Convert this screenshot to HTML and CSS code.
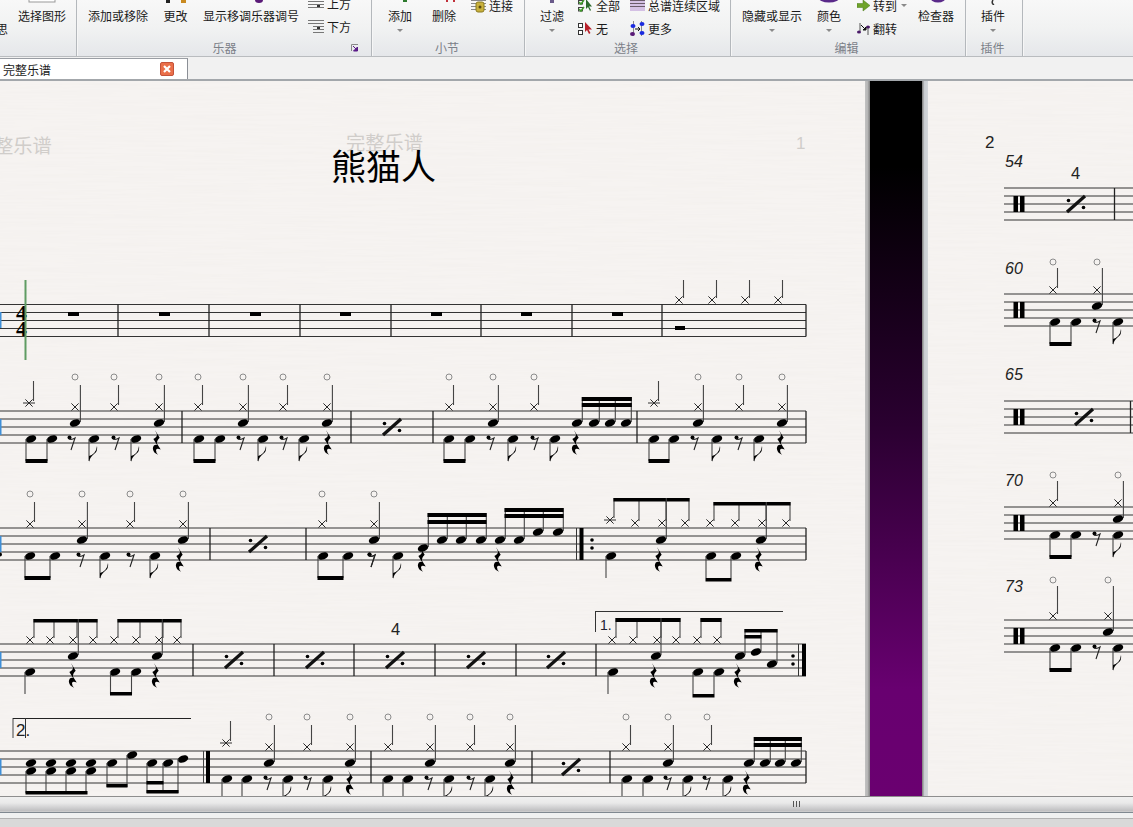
FILE: index.html
```html
<!DOCTYPE html>
<html lang="zh">
<head>
<meta charset="utf-8">
<title>熊猫人</title>
<link rel="stylesheet" href="styles.css">
</head>
<body>
<header class="ribbon">
  <section class="group g1">
    <div class="tools">
      <div class="small cut"><div class="row"></div><div class="row">思</div></div>
      <div class="big b-shape">
        <svg class="remnant" width="28" height="3"><rect x="1" y="-2" width="26" height="4" fill="#fff" stroke="#999"/></svg>
        <span class="t">选择图形</span>
      </div>
    </div>
    <div class="glabel"></div>
  </section>
  <section class="group g2">
    <div class="tools">
      <div class="big">
        <span class="t">添加或移除</span>
      </div>
      <div class="big">
        <svg class="remnant" width="24" height="3"><rect x="2" y="0" width="4" height="3" fill="#222"/><rect x="17" y="0" width="5" height="3" fill="#c98a20"/></svg>
        <span class="t">更改</span>
      </div>
      <div class="big">
        <svg class="remnant" width="24" height="3"><ellipse cx="20" cy="0" rx="4" ry="3" fill="#5a1a78"/></svg>
        <span class="t">显示移调乐器调号</span>
      </div>
      <div class="small up">
        <div class="row"><svg class="ic" width="17" height="14" viewBox="0 0 17 14"><path d="M0 1.500h16M0 4.500h16M0 7.500h16M0 10.500h16" stroke="#777" fill="none"/><rect x="9" y="8" width="3" height="2" fill="#333"/></svg>上方</div>
        <div class="row"><svg class="ic" width="17" height="15" viewBox="0 0 17 15"><path d="M0 1.500h16M0 4.500h16M5 7.500h11M5 10.500h11M5 13.500h11" stroke="#777" fill="none"/><rect x="9" y="8" width="3" height="2" fill="#333"/></svg>下方</div>
      </div>
    </div>
    <div class="glabel">乐器<svg class="launch" width="8" height="8" viewBox="0 0 8 8"><path d="M.5 7V.5H7" stroke="#888" fill="none"/><path d="M2 2l4 4M6.500 3v4h-4z" stroke="#5a1a88" fill="#5a1a88"/></svg></div>
  </section>
  <section class="group g3">
    <div class="tools">
      <div class="big">
        <svg class="remnant" width="24" height="3"><rect x="15" y="0" width="4" height="2" fill="#2d7a2d"/></svg>
        <span class="t">添加</span><i class="caret"></i>
      </div>
      <div class="big">
        <svg class="remnant" width="24" height="3"><path d="M15 0v2M22 0v2" stroke="#c0303a" stroke-width="2"/></svg>
        <span class="t">删除</span>
      </div>
      <div class="small">
        <div class="row"><svg class="ic" width="16" height="14" viewBox="0 0 16 14"><path d="M0 1.500h15M0 4.500h15M0 7.500h15M0 10.500h15" stroke="#888" fill="none"/><rect x="5" y="3" width="8" height="10" rx="2" fill="#c9b13c" stroke="#8a7a20"/><circle cx="9" cy="8" r="1.500" fill="#5a4a10"/></svg>连接</div>
      </div>
    </div>
    <div class="glabel">小节</div>
  </section>
  <section class="group g4">
    <div class="tools">
      <div class="big">
        <svg class="remnant" width="24" height="3"><rect x="10" y="0" width="4" height="3" fill="#6a5a8a"/></svg>
        <span class="t">过滤</span><i class="caret"></i>
      </div>
      <div class="small">
        <div class="row"><svg class="ic" width="15" height="14" viewBox="0 0 15 14"><rect x=".5" y="1.500" width="4" height="3.500" fill="none" stroke="#444"/><rect x=".5" y="8.500" width="4" height="3.500" fill="none" stroke="#444"/><path d="M1 3l2 2 3-4M1 10l2 2 3-4" stroke="#3f9a2a" stroke-width="1.500" fill="none"/><path d="M8 0v10l2-2 2 4 1-1-2-3.500h3z" fill="#2d6a2d"/></svg>全部</div>
        <div class="row"><svg class="ic" width="15" height="15" viewBox="0 0 15 15"><rect x=".5" y="2.500" width="4" height="4" fill="#fff" stroke="#333"/><rect x=".5" y="9.500" width="4" height="4" fill="#fff" stroke="#333"/><path d="M7 1v10l2-2 2 4 1.500-1-2-3.500H14z" fill="#b8202a"/></svg>无</div>
      </div>
      <div class="small">
        <div class="row"><svg class="ic" width="15" height="13" viewBox="0 0 15 13"><rect x="0" y="0" width="15" height="12" fill="#d4c0e4"/><path d="M0 1.500h15M0 4.500h15M0 7.500h15" stroke="#6a5a6a" fill="none"/></svg>总谱连续区域</div>
        <div class="row"><svg class="ic" width="15" height="16" viewBox="0 0 15 16"><path d="M3.500 0v15M11.500 0v15" stroke="#888" fill="none"/><ellipse cx="3" cy="5" rx="2.500" ry="2" fill="#1a2ae0"/><ellipse cx="2.500" cy="13" rx="2.500" ry="2" fill="#5a1a78"/><ellipse cx="12" cy="3" rx="2.500" ry="2" fill="#1a2ae0"/><ellipse cx="12" cy="12" rx="2.500" ry="2" fill="#1a2ae0"/><path d="M5 8h5M8 6l2 2-2 2" stroke="#111" fill="none"/></svg>更多</div>
      </div>
    </div>
    <div class="glabel">选择</div>
  </section>
  <section class="group g5">
    <div class="tools">
      <div class="big">
        <span class="t">隐藏或显示</span><i class="caret"></i>
      </div>
      <div class="big">
        <svg class="remnant" width="24" height="3"><ellipse cx="12" cy="-3" rx="11" ry="5.500" fill="#5a2a8a"/></svg>
        <span class="t">颜色</span><i class="caret"></i>
      </div>
      <div class="small">
        <div class="row"><svg class="ic" width="13" height="12" viewBox="0 0 13 12"><path d="M0 3.500h6V0l7 5.500L6 11V7.500H0z" fill="#6fa32a" stroke="#4a7a1a" stroke-width=".5"/></svg>转到<i class="caret inline"></i></div>
        <div class="row"><svg class="ic" width="13" height="15" viewBox="0 0 13 15"><path d="M3 2v8M11 6v8" stroke="#555" fill="none"/><ellipse cx="2" cy="11" rx="2" ry="1.500" fill="#4a1a68"/><ellipse cx="11" cy="6" rx="2" ry="1.500" fill="#4a1a68"/><path d="M4 4l5 5M9 6v3H6z" stroke="#111" fill="#111"/></svg>翻转</div>
      </div>
      <div class="big">
        <svg class="remnant" width="36" height="3"><ellipse cx="20" cy="-3" rx="8" ry="5.500" fill="#5a2a8a"/></svg>
        <span class="t">检查器</span>
      </div>
    </div>
    <div class="glabel">编辑</div>
  </section>
  <section class="group g6">
    <div class="tools">
      <div class="big">
        <svg class="remnant" width="24" height="5"><path d="M12 0q-2 3 1 5" stroke="#333" stroke-width="1.500" fill="none"/></svg>
        <span class="t">插件</span><i class="caret"></i>
      </div>
    </div>
    <div class="glabel">插件</div>
  </section>
</header>

<nav class="tabstrip">
  <div class="tab">
    <span class="tab-name">完整乐谱</span>
    <span class="tab-close"><svg width="10" height="10" viewBox="0 0 10 10"><path d="M2 2l6 6M8 2l-6 6" stroke="#fff" stroke-width="2.200"/></svg></span>
  </div>
</nav>

<main class="workspace">
  <svg id="page1" class="page page-left" viewBox="0 81 865 715" width="865" height="715" xmlns="http://www.w3.org/2000/svg"></svg>
  <div class="gutter"><div class="gutter-fill"></div></div>
  <svg id="page2" class="page page-right" viewBox="928 81 205 715" width="205" height="715" xmlns="http://www.w3.org/2000/svg"></svg>
</main>

<div class="hscroll"><span class="grip"></span></div>
<div class="spacer"></div>
<footer class="status"></footer>
<script src="score.js"></script>
</body>
</html>
```

FILE: styles.css
```css
* { box-sizing: border-box; }
html, body { margin: 0; padding: 0; }
body {
  width: 1133px;
  height: 827px;
  overflow: hidden;
  display: flex;
  flex-direction: column;
  background: #f0f0f0;
  font-family: "Noto Sans CJK SC", "Liberation Sans", sans-serif;
  font-size: 12px;
  color: #1a1a1a;
}
.ribbon {
  height: 57px;
  flex: none;
  display: flex;
  overflow: hidden;
  background: linear-gradient(#f8f8f8, #f1f2f2 50%, #e5e7ea);
  border-bottom: 1px solid #b9bcbf;
}
.group {
  flex: none;
  display: flex;
  flex-direction: column;
  border-right: 1px solid #b4b8bc;
  box-shadow: 1px 0 0 #f6f6f6;
  height: 56px;
  margin-right: 1px;
}
.g1 { width: 77px; }
.g2 { width: 294px; }
.g3 { width: 152px; }
.g4 { width: 205px; }
.g5 { width: 234px; }
.g6 { width: 56px; }
.tools { height: 40px; display: flex; align-items: flex-start; }
.glabel {
  position: relative;
  height: 16px;
  line-height: 16px;
  text-align: center;
  color: #7b8088;
}
.g3 .glabel { padding-right: 3px; }
.g4 .glabel, .g5 .glabel, .g6 .glabel { padding-right: 4px; }
.launch { position: absolute; right: 12px; top: 4px; }
.big { display: flex; flex-direction: column; align-items: center; position: relative; height: 40px; }
.big .t { position: absolute; top: 9px; white-space: nowrap; line-height: 14px; }
.remnant { position: absolute; top: 0; left: 50%; transform: translateX(-50%); }
.caret {
  position: absolute;
  top: 29px;
  width: 0; height: 0;
  border: 3.500px solid transparent;
  border-top: 3.500px solid #8a8a8a;
  border-bottom: 0;
}
.caret.inline { position: static; display: inline-block; margin-left: 4px; vertical-align: 4px; }
.small { display: flex; flex-direction: column; margin-top: -6px; }
.small.up { margin-top: -8px; }
.row { height: 23px; line-height: 23px; white-space: nowrap; display: flex; align-items: center; }
.ic { margin-right: 3px; flex: none; }
.up .ic { margin-right: 2px; }
.g3 .ic { margin-right: 2px; }

.g1 .cut { width: 8px; margin-left: -4px; }
.b-shape { width: 48px; margin-left: 14px; }
.g2 .tools { padding-left: 10px; }
.g2 .big:nth-child(1) { width: 60px; margin-right: 16px; }
.g2 .big:nth-child(2) { width: 23px; margin-right: 16px; }
.g2 .big:nth-child(3) { width: 96px; margin-right: 9px; }
.g3 .tools { padding-left: 15px; }
.g3 .big:nth-child(1) { width: 24px; margin-right: 20px; }
.g3 .big:nth-child(2) { width: 24px; margin-right: 15px; }
.g4 .tools { padding-left: 14px; }
.g4 .big { width: 24px; margin-right: 14px; }
.g4 .small:nth-child(2) { margin-right: 9px; width: 43px; }
.g5 .tools { padding-left: 10px; }
.g5 .big:nth-child(1) { width: 60px; margin-right: 15px; }
.g5 .big:nth-child(2) { width: 24px; margin-right: 16px; }
.g5 .small { width: 48px; margin-right: 13px; }
.g5 .big:nth-child(4) { width: 36px; }
.g6 .tools { padding-left: 14px; }
.g6 .big { width: 24px; }

.tabstrip {
  height: 24px;
  flex: none;
  background: #f1f1f1;
  border-bottom: 2px solid #a3a7ab;
  padding-top: 1px;
}
.tab {
  width: 188px;
  height: 21px;
  background: #fff;
  border-top: 1px solid #9a9ea4;
  border-right: 1px solid #8b8f96;
  display: flex;
  align-items: center;
  justify-content: space-between;
  padding: 0 13px 0 3px;
}
.tab-close {
  width: 14px;
  height: 14px;
  display: flex;
  align-items: center;
  justify-content: center;
  background: #ea6f49;
  border: 1px solid #c4523a;
  border-radius: 2px;
}
.workspace { height: 715px; flex: none; display: flex; background: #f3f0ed; }
.page { display: block; flex: none; }
.gutter {
  width: 63px;
  flex: none;
  padding: 0 6px 0 5px;
  background: linear-gradient(90deg, #c2c2c2 0, #b4b4b4 3px, #8b8b8b 4px, #8b8b8b 5px, #8b8b8b 58px, #c9ccd0 59px, #d3d6da 63px);
}
.gutter-fill {
  height: 100%;
  background: linear-gradient(#000 0, #000 12%, #2a0030 48%, #680070 85%, #6a0070 100%);
}
.hscroll {
  height: 16px;
  flex: none;
  border-top: 1px solid #8e8e8e;
  background: linear-gradient(#f0f0f0, #e9e9e9 40%, #c0c0c2 90%, #d0d0d0);
  position: relative;
}
.grip {
  position: absolute;
  left: 793px;
  top: 4px;
  width: 7px;
  height: 6px;
  background: repeating-linear-gradient(90deg, #555 0, #555 1px, transparent 1px, transparent 3px);
}
.spacer { height: 6px; flex: none; background: #eff0f0; border-top: 1px solid #7f8890; }
.status { height: 9px; flex: none; background: #d9d9d9; border-top: 1px solid #b2b2b2; }

/* score text */
.ghost { fill: #d0cdca; font-family: "Noto Sans CJK SC", sans-serif; }
.big-ghost, .mid-ghost { font-size: 19.300px; }
.num-ghost { font-family: "Liberation Sans", sans-serif; font-size: 17px; }
.title { font-family: "Noto Sans CJK SC", sans-serif; font-size: 35px; fill: #000; }
.timesig { font-family: "Liberation Serif", serif; font-weight: bold; font-size: 22px; fill: #000; }
.num { font-family: "Liberation Sans", sans-serif; font-size: 16.500px; fill: #222; }
.volta { font-family: "Liberation Sans", sans-serif; font-size: 14px; fill: #223; }
.volta2 { font-family: "Liberation Sans", sans-serif; font-size: 17px; fill: #222; }
.pagenum { font-family: "Liberation Sans", sans-serif; font-size: 17px; fill: #222; }
.barnum { font-family: "Liberation Sans", sans-serif; font-style: italic; font-size: 16px; fill: #222; }
```

FILE: score.js
```js
var out = [];
var INK = '#222';

function line(x1, y1, x2, y2, w, c) {
  out.push('<line x1="' + x1 + '" y1="' + y1 + '" x2="' + x2 + '" y2="' + y2 + '" stroke="' + (c || INK) + '" stroke-width="' + (w || 1) + '"/>');
}
function rect(x, y, w, h, c) {
  out.push('<rect x="' + x + '" y="' + y + '" width="' + w + '" height="' + h + '" fill="' + (c || '#000') + '"/>');
}
function txt(x, y, s, cls) {
  out.push('<text x="' + x + '" y="' + y + '" class="' + cls + '">' + s + '</text>');
}
function staff(x1, x2, top) {
  for (var i = 0; i < 5; i++) line(x1, top + i * 8, x2, top + i * 8, 1, '#333');
}
function bars(list, top) {
  list.forEach(function (x) { line(x, top, x, top + 32, 1.3, '#222'); });
}
function head(x, y) {
  out.push('<ellipse cx="' + x + '" cy="' + y + '" rx="5.4" ry="3.5" fill="#000" transform="rotate(-20 ' + x + ' ' + y + ')"/>');
}
function cross(x, y) {
  line(x - 3.6, y - 3.6, x + 3.6, y + 3.6, 1, '#2b2b2b');
  line(x - 3.6, y + 3.6, x + 3.6, y - 3.6, 1, '#2b2b2b');
}
function ring(x, y) {
  out.push('<circle cx="' + x + '" cy="' + y + '" r="3" fill="none" stroke="#8c8c8c"/>');
}
function stem(x, y1, y2) { line(x, y1, x, y2, 1.1, '#444'); }
function beam(x1, x2, y, h) { rect(x1 - 0.5, y, x2 - x1 + 1, h || 3.5); }
function rest8(x, y) {
  out.push('<circle cx="' + (x - 1.5) + '" cy="' + (y - 2.5) + '" r="2" fill="#000"/>');
  out.push('<path d="M' + (x - 2) + ' ' + (y - 1) + 'Q' + (x + 1) + ' ' + y + ' ' + (x + 4) + ' ' + (y - 2) + 'L' + x + ' ' + (y + 10) + '" fill="none" stroke="#222" stroke-width="1.1"/>');
}
/* the y passed in is the staff-relative anchor; the glyph is 25px tall */
function qrest(x, y) {
  out.push('<path transform="translate(' + x + ' ' + (y - 6) + ') scale(1.05 1.3)" d="M-1 0L3.500 6Q.5 8.500 1 10.500L4.500 15Q.5 13.500 0 15.500Q0 17.500 2 19Q-3 17.500-3 14Q-2.500 11 1 11.500L-2.500 7Q1 5.500 1 3.500Z" fill="#000"/>');
}
function flag(sx, sy) {
  out.push('<path d="M' + sx + ' ' + sy + 'Q' + (sx + 1) + ' ' + (sy - 5) + ' ' + (sx + 5) + ' ' + (sy - 8) + 'Q' + (sx + 9) + ' ' + (sy - 11) + ' ' + (sx + 8) + ' ' + (sy - 16) + 'Q' + (sx + 7) + ' ' + (sy - 8) + ' ' + sx + ' ' + (sy - 6) + 'Z" fill="#000"/>');
}
function simile(x, y) {
  line(x - 9, y + 8, x + 9, y - 8, 3.2, '#111');
  out.push('<circle cx="' + (x - 7.5) + '" cy="' + (y - 3.5) + '" r="1.8"/><circle cx="' + (x + 7.5) + '" cy="' + (y + 3.5) + '" r="1.8"/>');
}
function wrest(x, y) { rect(x, y, 11, 4); }
function blue(top) { rect(0, top + 8, 1.5, 16, '#3f8fd8'); }

/* lower voice of the common groove */
function lower(top, l) {
  var hy = top + 28;
  head(l[0], hy); stem(l[0] - 5, hy, top + 50);
  head(l[1], hy); stem(l[1] - 5, hy, top + 50);
  beam(l[0] - 5, l[1] - 5, top + 48, 4);
  rest8(l[2], top + 29);
  head(l[3], hy); stem(l[3] - 5, hy, top + 50); flag(l[3] - 5, top + 51);
  rest8(l[4], top + 29);
  if (l[5] !== undefined) { head(l[5], hy); stem(l[5] - 5, hy, top + 50); flag(l[5] - 5, top + 51); }
  if (l[6] !== undefined) qrest(l[6], top + 25);
}
/* x on top; hitHead marks a snare under the x; openRing adds the small circle */
function hat(top, x, hitHead, openRing) {
  cross(x, top - 4);
  if (openRing !== false) ring(x, top - 34);
  if (hitHead) { head(x, top + 12); stem(x + 5.4, top + 11, top - 26); }
  else stem(x + 4.5, top - 6, top - 26);
}
function firstHat(top, x) {
  cross(x, top - 8);
  line(x - 6, top - 8, x + 6, top - 8, 1, '#333');
  stem(x + 4.5, top - 10, top - 30);
}
function groove(top, x0, ups, lows, firstIsCrash) {
  ups.forEach(function (x, i) {
    var snare = i % 2 === 1;
    if (i === 0 && firstIsCrash) firstHat(top, x);
    else hat(top, x, snare);
  });
  lower(top, lows);
}
function sixteenths(top, xs, y, bt) {
  xs.forEach(function (x, i) {
    var ny = Array.isArray(y) ? y[i] : y;
    head(x, ny);
    stem(x + 5.3, ny - 1, bt);
  });
  beam(xs[0] + 5.3, xs[xs.length - 1] + 5.3, bt, 4);
  beam(xs[0] + 5.3, xs[xs.length - 1] + 5.3, bt + 6, 4);
}

function paper() {
  out.push('<defs><filter id="' + paper.id + '" x="0" y="0" width="100%" height="100%"><feTurbulence type="fractalNoise" baseFrequency="0.012 0.42" numOctaves="3" seed="7"/><feColorMatrix values="0 0 0 0 0.9  0 0 0 0 0.875  0 0 0 0 0.855  1.8 0 0 0 -0.62"/></filter></defs>');
  out.push('<rect x="0" y="81" width="1133" height="715" fill="#f6f3f1"/>');
  out.push('<rect x="0" y="81" width="1133" height="715" filter="url(#' + paper.id + ')"/>');
}

/* ===== left page ===== */
paper.id = 'p1';
paper();
txt(-6, 153, '整乐谱', 'ghost big-ghost');
txt(346, 150, '完整乐谱', 'ghost mid-ghost');
txt(796, 149, '1', 'ghost num-ghost');
txt(331, 180, '熊猫人', 'title');

/* row 1 */
var t = 304.5;
staff(0, 806, t); blue(304);
bars([118, 209, 300, 391, 481, 572, 662, 806], t);
txt(16, 320, '4', 'timesig'); txt(16, 336, '4', 'timesig');
line(25.5, 280, 25.5, 360, 2, '#5f9c63');
[68, 159, 250, 340, 431, 521, 612].forEach(function (x) { wrest(x, 312); });
rect(675, 326, 10, 4);
[679, 712, 745, 778].forEach(function (x) { cross(x, 300); stem(x + 4.5, 298, 280); });

/* row 2 */
t = 411;
staff(0, 806, t); blue(t);
bars([182, 351, 433, 637, 806], t);
groove(t, 0, [29, 75, 114, 159], [31, 52, 71, 94, 115, 136, 156], true);
groove(t, 0, [198, 243, 283, 327], [199, 220, 240, 263, 283, 304, 327]);
simile(392, t + 16);
hat(t, 449); hat(t, 493, true); hat(t, 534);
lower(t, [449, 470, 490, 513, 534, 555, 575]);
sixteenths(t, [577, 594, 610, 626], t + 12, t - 14);
groove(t, 0, [654, 698, 739, 782], [654, 674, 694, 717, 738, 759, 780], true);

/* row 3 */
t = 528;
staff(0, 806, t); blue(t);
bars([210, 306, 806], t);
groove(t, 0, [30, 82, 130, 183], [30, 55, 80, 105, 130, 155, 179]);
simile(258, t + 16);
hat(t, 322); hat(t, 374, true);
lower(t, [323, 348, 371, 398]);
rest8(371, t + 29);
head(423, t + 20); stem(428.3, t + 19, t - 15); qrest(421, t + 25);
[442, 461, 481].forEach(function (x) { head(x, t + 12); stem(x + 5.3, t + 11, t - 15); });
beam(428, 486, t - 15, 4); beam(428, 486, t - 8, 4);
qrest(497, t + 25);
[[500, 12], [519, 12], [538, 4], [558, 4]].forEach(function (n) { head(n[0], t + n[1] + 0); stem(n[0] + 5.3, t + n[1] - 1, t - 20); });
beam(505, 563, t - 20, 4); beam(505, 563, t - 14, 4);
line(576.5, t, 576.5, t + 32, 1, '#333'); rect(579.5, t, 4, 32);
out.push('<circle cx="592" cy="' + (t + 12) + '" r="1.8"/><circle cx="592" cy="' + (t + 20) + '" r="1.8"/>');

function driveBar(top, ups, dash) {
  ups.forEach(function (g, gi) {
    var by = top - 30 + gi * 4;
    g.forEach(function (x, i) {
      var crash = gi === 0 && i === 0 && dash;
      cross(x, top - 5 - (crash ? 3 : 0));
      if (crash) line(x - 6, top - 8, x + 6, top - 8, 1, '#333');
      stem(x + 4, top - 7 - (crash ? 3 : 0), by);
    });
    beam(g[0] + 4, g[g.length - 1] + 4, by, 3.5);
  });
}
driveBar(t, [[610, 635, 662, 685], [710, 735, 762, 786]], true);
head(611, t + 28); stem(606, t + 28, t + 50);
head(661, t + 12); stem(666.3, t + 11, t - 30); qrest(658, t + 25);
head(711, t + 28); head(736, t + 28); stem(706, t + 28, t + 50); stem(731, t + 28, t + 50); beam(706, 731, t + 50, 3.5);
head(761, t + 12); stem(766.3, t + 11, t - 26); qrest(758, t + 25);

/* row 4 */
t = 644;
staff(0, 806, t); blue(t);
bars([193, 274, 354, 435, 516, 596], t);
[[30, 50, 73, 93], [114, 136, 159, 177]].forEach(function (g) {
  g.forEach(function (x) { cross(x, t - 4); stem(x + 4, t - 6, t - 25); });
  beam(g[0] + 4, g[3] + 4, t - 25, 3.5);
});
head(30, t + 28); stem(25, t + 28, t + 50);
head(73, t + 12); stem(78.3, t + 11, t - 25); qrest(72, t + 25);
head(115, t + 28); head(136, t + 28); stem(110.5, t + 28, t + 50); stem(131.5, t + 28, t + 50); beam(110.5, 131.5, t + 48, 3.5);
head(157, t + 12); stem(162.3, t + 11, t - 25); qrest(155, t + 25);
[234, 315, 395, 476, 556].forEach(function (x) { simile(x, t + 16); });
txt(391, 635, '4', 'num');
/* first ending */
line(595.5, 632, 595.5, 612, 1, '#333'); line(595, 611.5, 783, 611.5, 1, '#333');
txt(600, 630, '1.', 'volta');
[[612, 633, 657, 676], [697, 717]].forEach(function (g) {
  g.forEach(function (x) { cross(x, t - 4); stem(x + 4, t - 6, t - 26); });
  beam(g[0] + 4, g[g.length - 1] + 4, t - 26, 4);
});
head(613, t + 28); stem(608, t + 28, t + 50);
head(656, t + 12); stem(661, t + 11, t - 26); qrest(653, t + 25);
head(698, t + 28); head(719, t + 28); stem(693, t + 28, t + 50); stem(714, t + 28, t + 50); beam(693, 714, t + 50, 3.5);
qrest(737, t + 25);
head(740, t + 12); stem(745, t + 11, t - 15);
head(756, t + 8); stem(761, t + 7, t - 15);
head(772, t + 20); stem(777, t + 19, t - 15);
beam(745, 777, t - 15, 3.5); beam(745, 761, t - 9, 3.5);
out.push('<circle cx="793" cy="' + (t + 12) + '" r="1.8"/><circle cx="793" cy="' + (t + 20) + '" r="1.8"/>');
line(798.5, t, 798.5, t + 32, 1, '#333'); rect(802, t, 4, 32);

/* row 5 */
t = 751;
staff(0, 806, t); blue(t);
bars([371, 532, 610, 806], t);
line(13, 738, 13, 718, 1, '#444'); line(13, 718.5, 191, 718.5, 1, '#222'); line(25.5, 718, 25.5, 738, 1, '#333');
txt(16, 736, '2.', 'volta2');
[31, 51, 71, 91].forEach(function (x) { head(x, t + 12); head(x, t + 20); stem(x - 5, t + 20, t + 42); });
beam(26, 87, t + 40, 3.5);
head(112, t + 12); stem(107, t + 12, t + 36); head(132, t + 4); stem(127, t + 4, t + 36); beam(107, 127, t + 33, 3.5);
head(152, t + 12); head(168, t + 12); head(183, t + 8);
stem(147, t + 12, t + 42); stem(163, t + 12, t + 42); stem(178, t + 8, t + 42);
beam(147, 178, t + 39, 3.5); beam(147, 163, t + 30, 3.5);
line(203.5, t, 203.5, t + 32, 1, '#444'); rect(206, t, 4, 32);
groove(t, 0, [226, 269, 307, 350], [227, 247, 267, 288, 307, 328, 349], true);
groove(t, 0, [388, 430, 470, 510], [388, 408, 428, 449, 470, 490, 510]);
simile(571, t + 16);
hat(t, 626); hat(t, 668, true); hat(t, 707);
lower(t, [627, 648, 667, 688, 706, 728, 746]);
sixteenths(t, [749, 765, 780, 796], t + 12, t - 14);
document.getElementById('page1').innerHTML = out.join('');

/* ===== right page ===== */
out = [];
paper.id = 'p2';
paper();
function repBar(top) { rect(1013.5, top + 8, 4.5, 16); rect(1020, top + 8, 4.5, 16); }
txt(985, 148, '2', 'pagenum');
txt(1005, 167, '54', 'barnum');
t = 188; staff(1004, 1133, t); repBar(t); line(1114.5, t, 1114.5, t + 32, 1.3, '#222');
txt(1071, 179, '4', 'num');
simile(1076, t + 16);

txt(1005, 274, '60', 'barnum');
t = 294; staff(1004, 1133, t); repBar(t);
function right(top, xa, xb, ringY) {
  cross(xa, top - 4); ring(xa, ringY); stem(xa + 4.5, top - 6, ringY + 6);
  cross(xb, top - 4); ring(xb, ringY); head(xb, top + 12); stem(xb + 5.4, top + 11, ringY + 6);
  lower(top, [1055, 1076, 1096, 1118]);
}
right(t, 1053, 1097, 262);

txt(1005, 380, '65', 'barnum');
t = 401; staff(1004, 1133, t); repBar(t); line(1130.5, t, 1130.5, t + 32, 1.3, '#222');
simile(1084, t + 16);

txt(1005, 486, '70', 'barnum');
t = 507; staff(1004, 1133, t); repBar(t);
right(t, 1053, 1118, 475);

txt(1005, 592, '73', 'barnum');
t = 620; staff(1004, 1133, t); repBar(t);
right(t, 1053, 1108, 580);
document.getElementById('page2').innerHTML = out.join('');
```
